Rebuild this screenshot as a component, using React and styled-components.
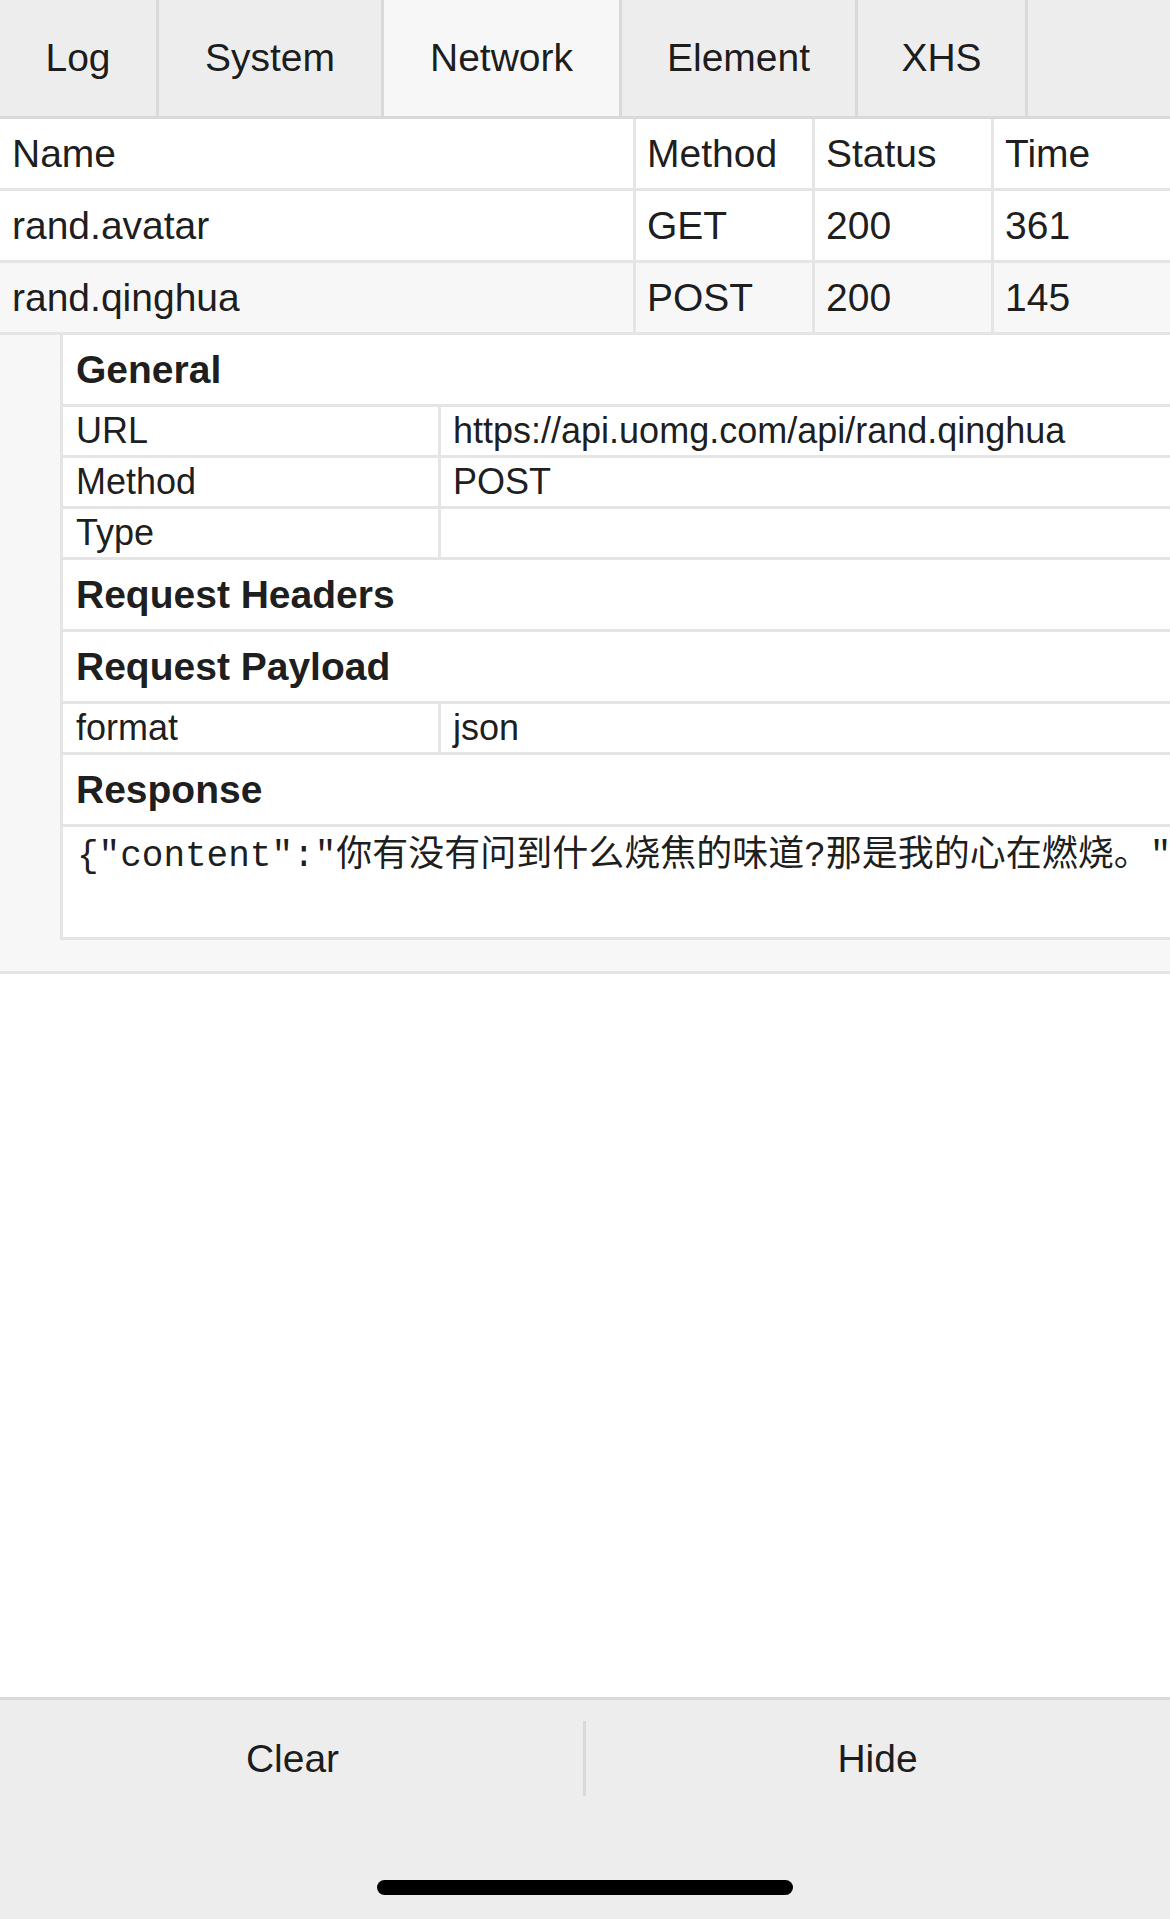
import React from 'react';
import styled, { createGlobalStyle } from 'styled-components';

const GlobalStyle = createGlobalStyle`
  html, body {
    margin: 0;
    padding: 0;
    background: #fff;
  }
  body {
    font-family: 'Liberation Sans', Arial, 'Noto Sans CJK SC', sans-serif;
    color: rgba(0, 0, 0, 0.9);
  }
  * {
    box-sizing: border-box;
  }
`;

const Panel = styled.div`
  display: flex;
  flex-direction: column;
  width: 1170px;
  min-height: 1919px;
  overflow: hidden;
`;

const TabBar = styled.nav`
  display: flex;
  height: 119px;
  background: #ededed;
  border-bottom: 3px solid #d9d9d9;
`;

const Tab = styled.div`
  width: ${(p) => p.$width}px;
  font-size: 39px;
  line-height: 116px;
  text-align: center;
  white-space: nowrap;
  border-right: 3px solid #d9d9d9;
  background: ${(p) => (p.$active ? '#f7f7f7' : '#ededed')};
`;

const Content = styled.main`
  flex: 1;
  background: #fff;
`;

const Row = styled.div`
  display: grid;
  grid-template-columns: 633px 179px 179px 179px;
  border-bottom: 3px solid #e5e5e5;
  background: ${(p) => (p.$selected ? '#f7f7f7' : '#fff')};
`;

const Cell = styled.div`
  height: 69px;
  padding-left: 12px;
  font-size: 39px;
  line-height: 69px;
  white-space: nowrap;
  overflow: hidden;

  & + & {
    border-left: 3px solid #e5e5e5;
    padding-left: 11px;
  }
`;

const Detail = styled.section`
  background: #f7f7f7;
  padding: 0 0 31px 60px;
  border-bottom: 3px solid #e5e5e5;
`;

const DetailTable = styled.div`
  background: #fff;
  border-left: 3px solid #e5e5e5;
  border-bottom: 3px solid #e5e5e5;
`;

const SectionTitle = styled.div`
  height: 72px;
  padding-left: 13px;
  font-size: 39px;
  font-weight: bold;
  line-height: 69px;
  border-bottom: 3px solid #e5e5e5;
`;

const KeyValue = styled.div`
  display: grid;
  grid-template-columns: 375px 1fr;
  border-bottom: 3px solid #e5e5e5;
`;

const Key = styled.div`
  height: 48px;
  padding-left: 13px;
  font-size: 36px;
  line-height: 48px;
  white-space: nowrap;
`;

const Value = styled(Key)`
  padding-left: 12px;
  border-left: 3px solid #e5e5e5;
`;

const Body = styled.pre`
  margin: 0;
  min-height: 110px;
  padding: 7px 0 0 14px;
  font-family: 'Liberation Mono', 'Courier New', 'Noto Sans CJK SC', monospace;
  font-size: 36px;
  line-height: 45px;
  white-space: pre;
  overflow: hidden;
`;

const Footer = styled.footer`
  background: #ededed;
  border-top: 3px solid #d9d9d9;
`;

const ToolRow = styled.div`
  display: flex;
  height: 117px;
`;

const Tool = styled.div`
  position: relative;
  flex: 1;
  text-align: center;
  font-size: 39px;
  line-height: 117px;

  & + &::before {
    content: '';
    position: absolute;
    left: -2px;
    top: 21px;
    bottom: 21px;
    width: 3px;
    background: #d9d9d9;
  }
`;

const SafeArea = styled.div`
  display: flex;
  justify-content: center;
  height: 102px;
  padding-top: 63px;
`;

const HomeIndicator = styled.div`
  width: 416px;
  height: 15px;
  border-radius: 8px;
  background: #000;
`;

const tabs = [
  { label: 'Log', width: 159 },
  { label: 'System', width: 225 },
  { label: 'Network', width: 238 },
  { label: 'Element', width: 236 },
  { label: 'XHS', width: 170 },
];

const requests = [
  { name: 'rand.avatar', method: 'GET', status: '200', time: '361' },
  { name: 'rand.qinghua', method: 'POST', status: '200', time: '145', selected: true },
];

const general = [
  ['URL', 'https://api.uomg.com/api/rand.qinghua'],
  ['Method', 'POST'],
  ['Type', ''],
];

const App = () => {
  return (
    <Panel>
      <GlobalStyle />
      <TabBar>
        {tabs.map((t) => (
          <Tab key={t.label} $width={t.width} $active={t.label === 'Network'}>
            {t.label}
          </Tab>
        ))}
      </TabBar>
      <Content>
        <Row>
          <Cell>Name</Cell>
          <Cell>Method</Cell>
          <Cell>Status</Cell>
          <Cell>Time</Cell>
        </Row>
        {requests.map((r) => (
          <Row key={r.name} $selected={r.selected}>
            <Cell>{r.name}</Cell>
            <Cell>{r.method}</Cell>
            <Cell>{r.status}</Cell>
            <Cell>{r.time}</Cell>
          </Row>
        ))}
        <Detail>
          <DetailTable>
            <SectionTitle>General</SectionTitle>
            {general.map(([k, v]) => (
              <KeyValue key={k}>
                <Key>{k}</Key>
                <Value>{v}</Value>
              </KeyValue>
            ))}
            <SectionTitle>Request Headers</SectionTitle>
            <SectionTitle>Request Payload</SectionTitle>
            <KeyValue>
              <Key>format</Key>
              <Value>json</Value>
            </KeyValue>
            <SectionTitle>Response</SectionTitle>
            <Body>{'{"content":"你有没有问到什么烧焦的味道?那是我的心在燃烧。"}'}</Body>
          </DetailTable>
        </Detail>
      </Content>
      <Footer>
        <ToolRow>
          <Tool>Clear</Tool>
          <Tool>Hide</Tool>
        </ToolRow>
        <SafeArea>
          <HomeIndicator />
        </SafeArea>
      </Footer>
    </Panel>
  );
};

export default App;
